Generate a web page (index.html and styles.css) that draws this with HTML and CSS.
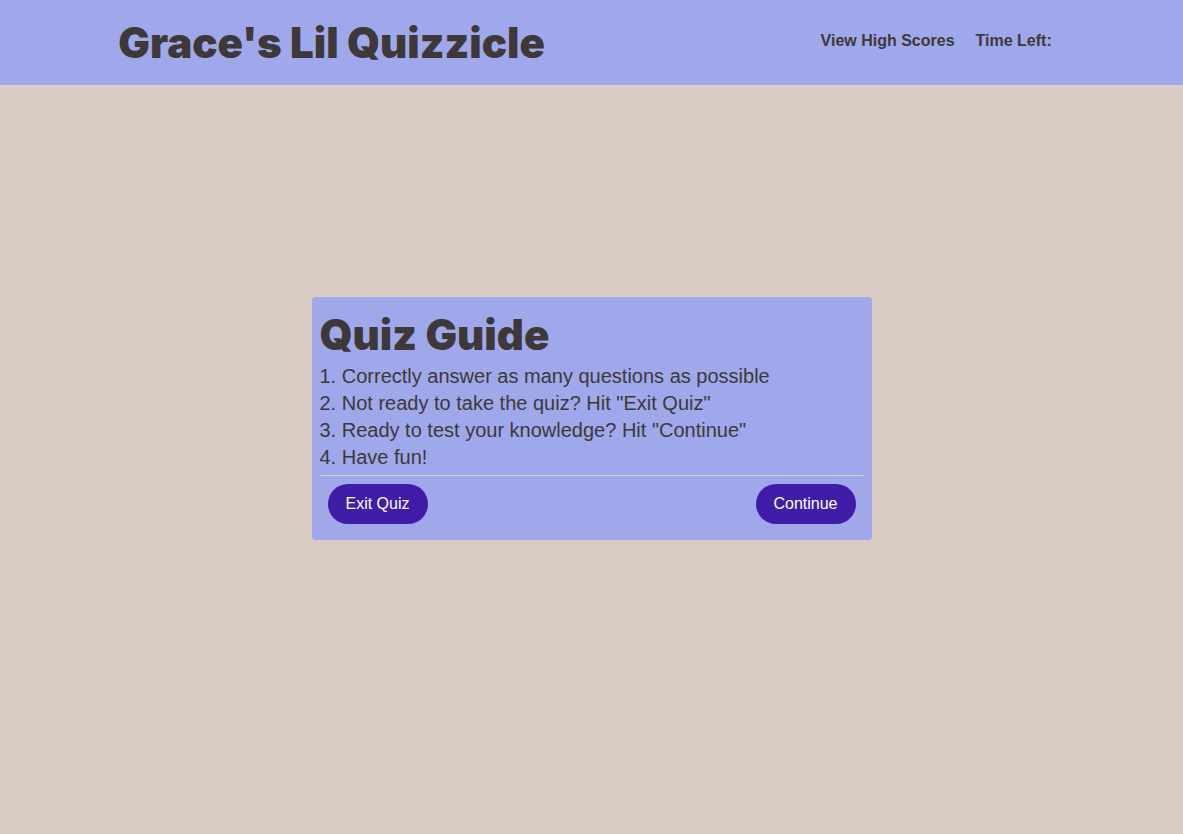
FILE: index.html
```html
<!DOCTYPE html>
<html lang="en">
<head>
  <meta charset="utf-8">
  <meta name="viewport" content="width=device-width, initial-scale=1">
  <title>Grace's Lil Quizzicle</title>
  <link rel="stylesheet" href="styles.css">
</head>
<body>
  <header class="site-header">
    <h1 class="title">Grace's Lil Quizzicle</h1>
    <nav class="site-nav">
      <a class="nav-item" href="#scores">View High Scores</a>
      <span class="nav-item">Time Left:</span>
    </nav>
  </header>
  <main class="stage">
    <section class="guide">
      <h2 class="title">Quiz Guide</h2>
      <ol class="rules">
        <li>Correctly answer as many questions as possible</li>
        <li>Not ready to take the quiz? Hit "Exit Quiz"</li>
        <li>Ready to test your knowledge? Hit "Continue"</li>
        <li>Have fun!</li>
      </ol>
      <div class="actions">
        <button class="pill" type="button">Exit Quiz</button>
        <button class="pill" type="button">Continue</button>
      </div>
    </section>
  </main>
</body>
</html>
```
FILE: styles.css
```css
* {
  box-sizing: border-box;
  margin: 0;
  padding: 0;
}

body {
  display: flex;
  flex-direction: column;
  min-height: 100vh;
  background: #d9cac3;
  color: #3e3839;
  font-family: "Liberation Sans", Arial, sans-serif;
  font-size: 16px;
}

.site-header {
  display: flex;
  flex-wrap: wrap;
  align-items: flex-start;
  justify-content: space-between;
  padding: 15px 10% 14px;
  background: #9fa8ea;
}

.title {
  font-family: "Arial Black", Inter, sans-serif;
  font-size: 42px;
  font-weight: 900;
  line-height: 56px;
}

.site-nav {
  display: flex;
  gap: 21px;
  padding: 17px 13px 0 0;
}

.nav-item {
  color: inherit;
  font-weight: bold;
  line-height: 18px;
  text-decoration: none;
}

.stage {
  display: flex;
  flex: 1;
  align-items: center;
  justify-content: center;
  padding-bottom: 82px;
}

.guide {
  width: 560px;
  max-width: 100%;
  padding: 10px 8px 8px;
  border-radius: 4px;
  background: #9fa8ea;
}

.rules {
  padding-bottom: 4px;
  border-bottom: 1px solid #d9cac3;
  font-size: 20px;
  line-height: 27px;
  list-style-position: inside;
}

.actions {
  display: flex;
  justify-content: space-between;
  padding: 8px;
}

.pill {
  min-width: 100px;
  height: 40px;
  border: 0;
  border-radius: 20px;
  background: #3f1da8;
  color: #fff;
  font: inherit;
  cursor: pointer;
}
```
